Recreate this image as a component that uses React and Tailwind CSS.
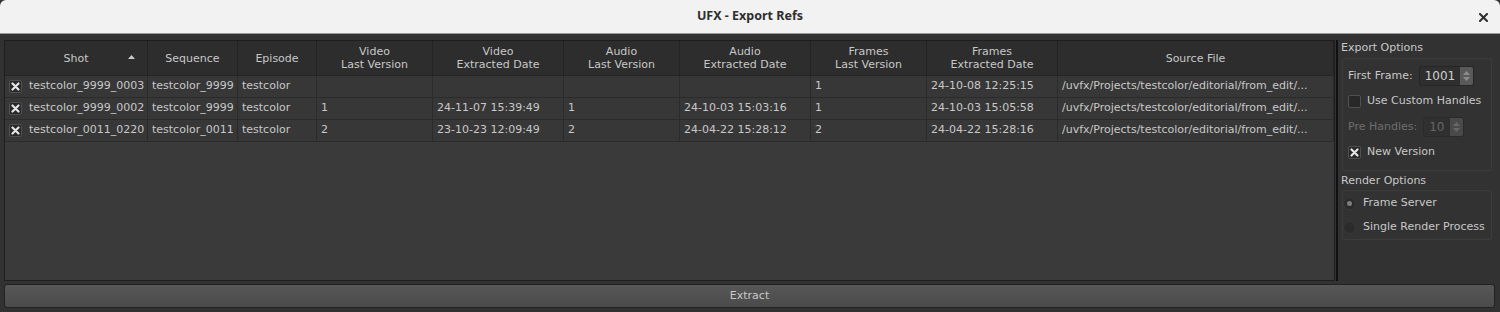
import React from 'react';

const font = { fontFamily: '"DejaVu Sans", "Liberation Sans", sans-serif' };

const columns = [
  { label: ['Shot'], sort: true },
  { label: ['Sequence'] },
  { label: ['Episode'] },
  { label: ['Video', 'Last Version'] },
  { label: ['Video', 'Extracted Date'] },
  { label: ['Audio', 'Last Version'] },
  { label: ['Audio', 'Extracted Date'] },
  { label: ['Frames', 'Last Version'] },
  { label: ['Frames', 'Extracted Date'] },
  { label: ['Source File'] },
];

const rows = [
  ['testcolor_9999_0003', 'testcolor_9999', 'testcolor', '', '', '', '', '1', '24-10-08 12:25:15', '/uvfx/Projects/testcolor/editorial/from_edit/...'],
  ['testcolor_9999_0002', 'testcolor_9999', 'testcolor', '1', '24-11-07 15:39:49', '1', '24-10-03 15:03:16', '1', '24-10-03 15:05:58', '/uvfx/Projects/testcolor/editorial/from_edit/...'],
  ['testcolor_0011_0220', 'testcolor_0011', 'testcolor', '2', '23-10-23 12:09:49', '2', '24-04-22 15:28:12', '2', '24-04-22 15:28:16', '/uvfx/Projects/testcolor/editorial/from_edit/...'],
];

const gridCols = 'grid grid-cols-[143px_90px_79px_116px_131px_116px_131px_116px_131px_1fr]';

const CheckMark = () => (
  <svg width="9" height="9" viewBox="0 0 9 9">
    <path d="M1.5 1.5 L7.5 7.5 M7.5 1.5 L1.5 7.5" stroke="#e6e6e6" strokeWidth="2.2" strokeLinecap="round" />
  </svg>
);

const CheckBox = ({ checked }) => (
  <span className="w-[13px] h-[13px] shrink-0 bg-[#282828] border border-[#505050] rounded-[2px] flex items-center justify-center">
    {checked && <CheckMark />}
  </span>
);

const SpinBox = ({ value, disabled, width }) => (
  <div className={`h-[20px] flex items-stretch border border-[#252525] rounded-[3px] bg-[#2f2f2f] ${disabled ? 'opacity-60' : ''}`} style={{ width }}>
    <span className={`flex-1 flex items-center pl-[5px] text-[12px] ${disabled ? 'text-[#8a8a8a]' : 'text-[#d0d0d0]'}`}>{value}</span>
    <span className="w-[13px] bg-[#5a5a5a] rounded-r-[2px] flex flex-col items-center justify-center gap-[2px]">
      <svg width="7" height="4" viewBox="0 0 7 4"><path d="M0 4 L3.5 0 L7 4 Z" fill="#8c8c8c" /></svg>
      <svg width="7" height="4" viewBox="0 0 7 4"><path d="M0 0 L3.5 4 L7 0 Z" fill="#8c8c8c" /></svg>
    </span>
  </div>
);

const Radio = ({ checked, label }) => (
  <div className="flex items-center gap-[7px] h-[24px] whitespace-nowrap">
    <span className="w-[13px] h-[13px] shrink-0 rounded-full bg-[#2b2b2b] border border-[#3a3a3a] flex items-center justify-center">
      {checked && <span className="w-[5px] h-[5px] rounded-full bg-[#7e7e7e]" />}
    </span>
    <span className="text-[11px] text-[#c8c8c8]">{label}</span>
  </div>
);

function Table() {
  return (
    <div className="flex-1 border border-[#1e1e1e] bg-[#3a3a3a] flex flex-col">
      <div className={`${gridCols} h-[35px] bg-[#2d2d2d] border-b border-[#232323]`}>
        {columns.map((c, i) => (
          <div key={i} className="relative flex flex-col items-center justify-center border-r border-[#232323] text-[11px] leading-[13px] text-[#c8c8c8]">
            {c.label.map((l) => <span key={l}>{l}</span>)}
            {c.sort && (
              <svg className="absolute right-[12px] top-[14px]" width="7" height="4" viewBox="0 0 7 4"><path d="M0 4 L3.5 0 L7 4 Z" fill="#c8c8c8" /></svg>
            )}
          </div>
        ))}
      </div>
      {rows.map((r, ri) => (
        <div key={ri} className={`${gridCols} h-[22px] bg-[#373737] border-b border-[#2b2b2b]`}>
          {r.map((cell, ci) => (
            <div key={ci} className="flex items-center gap-[7px] pl-[4px] border-r border-[#2b2b2b] text-[11px] text-[#c8c8c8] whitespace-nowrap overflow-hidden">
              {ci === 0 && <CheckBox checked />}
              <span>{cell}</span>
            </div>
          ))}
        </div>
      ))}
    </div>
  );
}

function Options() {
  return (
    <div className="w-[158px] pl-[3px] flex flex-col">
      <div className="text-[11px] text-[#c8c8c8] h-[15px] leading-[15px]">Export Options</div>
      <div className="mt-[3px] ml-[1px] mr-[4px] border border-[#3c3c3c] rounded-[2px] px-[5px] pt-[6px] pb-[6px] flex flex-col">
        <div className="flex items-center gap-[6px] h-[22px]">
          <span className="text-[11px] text-[#c8c8c8]">First Frame:</span>
          <SpinBox value="1001" width={55} />
        </div>
        <div className="flex items-center gap-[6px] h-[24px] mt-[2px]">
          <CheckBox />
          <span className="text-[11px] text-[#c8c8c8]">Use Custom Handles</span>
        </div>
        <div className="flex items-center gap-[6px] h-[27px] pt-[1px]">
          <span className="text-[11px] text-[#6e6e6e]">Pre Handles:</span>
          <SpinBox value="10" disabled width={41} />
        </div>
        <div className="flex items-center gap-[6px] h-[24px]">
          <CheckBox checked />
          <span className="text-[11px] text-[#c8c8c8]">New Version</span>
        </div>
      </div>
      <div className="text-[11px] text-[#c8c8c8] h-[15px] leading-[15px] mt-[2px]">Render Options</div>
      <div className="mt-[2px] ml-[1px] mr-[4px] border border-[#3c3c3c] rounded-[2px] px-0 py-0 flex flex-col">
        <Radio checked label="Frame Server" />
        <Radio label="Single Render Process" />
      </div>
    </div>
  );
}

export default function App() {
  return (
    <div className="w-[1500px] h-[312px] bg-[#323232] flex flex-col overflow-hidden" style={font}>
      <div className="h-[34px] shrink-0 bg-[#f2f2f2] rounded-t-[6px] relative flex items-center justify-center border-b border-[#9a9a9a]">
        <span className="text-[12.5px] font-bold text-[#2e2e2e]" style={{ fontFamily: '"Noto Sans", "Open Sans", sans-serif' }}>UFX - Export Refs</span>
        <svg className="absolute right-[12px] top-[13px]" width="9" height="9" viewBox="0 0 9 9">
          <path d="M1 1 L8 8 M8 1 L1 8" stroke="#2e2e2e" strokeWidth="2" strokeLinecap="square" />
        </svg>
      </div>
      <div className="flex-1 flex flex-col px-[4px] pt-[6px] pb-[4px] gap-[3px]">
        <div className="flex-1 flex">
          <Table />
          <div className="w-[2px] ml-[1px] bg-[#111]" />
          <Options />
        </div>
        <button className="h-[24px] shrink-0 mr-[1px] border border-[#222] rounded-[3px] bg-gradient-to-b from-[#575757] to-[#4b4b4b] text-[11px] text-[#c8c8c8]">
          Extract
        </button>
      </div>
    </div>
  );
}
